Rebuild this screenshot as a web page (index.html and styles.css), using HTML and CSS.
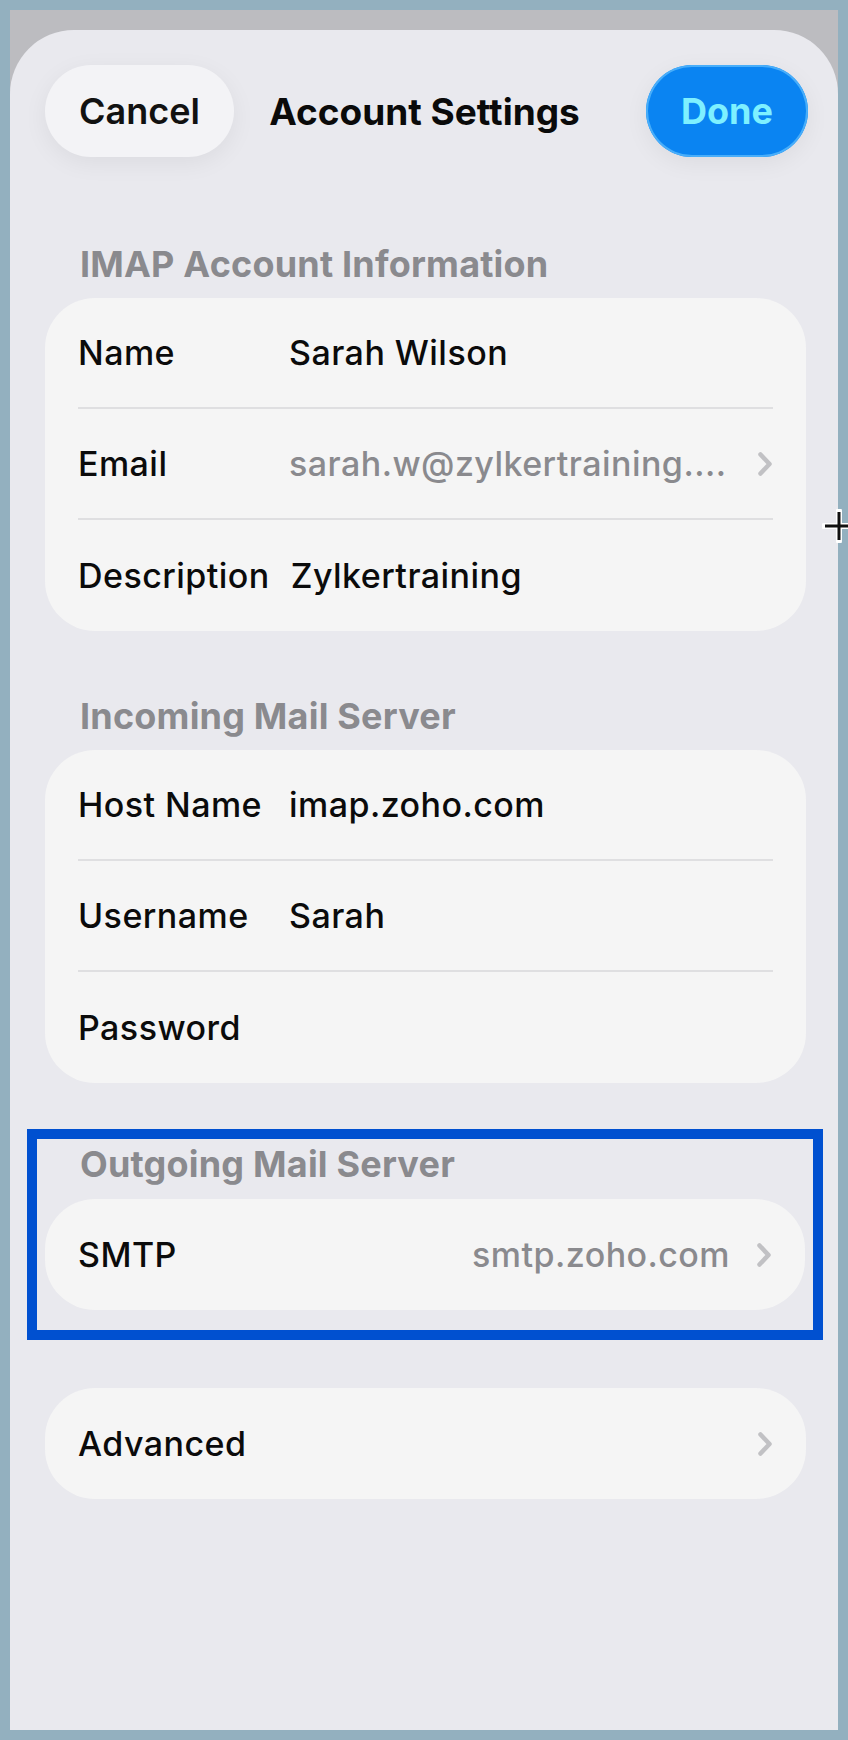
FILE: index.html
```html
<!DOCTYPE html>
<html lang="en">
  <head>
    <meta charset="UTF-8" />
    <meta name="viewport" content="width=device-width, initial-scale=1.0" />
    <title>Account Settings</title>
    <link rel="stylesheet" href="styles.css">
  </head>
  <body>
    <div class="screen">
      <div class="sheet">
        <!-- Верхняя панель -->
        <header class="topbar">
          <button class="pill cancel">Cancel</button>
          <h1 class="title">Account Settings</h1>
          <button class="pill done">Done</button>
        </header>

        <!-- IMAP -->
        <h2 class="section-title first">IMAP Account Information</h2>
        <div class="card">
          <div class="row">
            <span class="label">Name</span>
            <span class="value">Sarah Wilson</span>
          </div>
          <div class="row">
            <span class="label">Email</span>
            <span class="value muted">sarah.w@zylkertraining....</span>
            <svg class="chevron" viewBox="0 0 16 26"><path d="M3.5 3.5 L12.5 13 L3.5 22.5" /></svg>
          </div>
          <div class="row">
            <span class="label">Description</span>
            <span class="value">Zylkertraining</span>
          </div>
        </div>

        <!-- Входящая почта -->
        <h2 class="section-title">Incoming Mail Server</h2>
        <div class="card">
          <div class="row">
            <span class="label">Host Name</span>
            <span class="value">imap.zoho.com</span>
          </div>
          <div class="row">
            <span class="label">Username</span>
            <span class="value">Sarah</span>
          </div>
          <div class="row">
            <span class="label">Password</span>
            <span class="value"></span>
          </div>
        </div>

        <!-- Исходящая почта (выделено рамкой) -->
        <div class="highlight">
          <h2 class="section-title">Outgoing Mail Server</h2>
          <div class="card single">
            <div class="row">
              <span class="label">SMTP</span>
              <span class="value muted right">smtp.zoho.com</span>
              <svg class="chevron" viewBox="0 0 16 26"><path d="M3.5 3.5 L12.5 13 L3.5 22.5" /></svg>
            </div>
          </div>
        </div>

        <div class="card single advanced">
          <div class="row">
            <span class="label">Advanced</span>
            <span class="value"></span>
            <svg class="chevron" viewBox="0 0 16 26"><path d="M3.5 3.5 L12.5 13 L3.5 22.5" /></svg>
          </div>
        </div>
      </div>
    </div>

    <!-- курсор мыши -->
    <svg class="cursor" viewBox="0 0 34 34">
      <path d="M17 2 V32 M2 17 H32" stroke="#fff" stroke-width="6" stroke-linecap="round" />
      <path d="M17 3 V31 M3 17 H31" stroke="#111" stroke-width="3" />
    </svg>
  </body>
</html>
```

FILE: styles.css
```css
/* Основа */
body {
  margin: 0;
  background-color: #93b0bf;
  font-family: Inter, "Noto Sans", sans-serif;
  position: relative;
}

.screen {
  width: 828px;
  height: 1720px;
  margin: 10px;
  padding-top: 20px;
  box-sizing: border-box;
  background-color: #bcbcc0;
}

.sheet {
  height: 1700px;
  padding: 35px 32px 0 35px;
  box-sizing: border-box;
  background-color: #e9e9ee;
  border-radius: 64px 64px 0 0;
}

/* Верхняя панель */
.topbar {
  display: grid;
  grid-template-columns: 1fr auto 1fr;
  align-items: center;
}

.pill {
  height: 92px;
  border: none;
  border-radius: 46px;
  font-family: inherit;
  font-size: 36px;
  padding: 0;
}

.cancel {
  justify-self: start;
  width: 189px;
  background-color: #f3f3f6;
  color: #111;
  font-weight: 600;
  box-shadow: 0 6px 24px rgba(0, 0, 0, 0.06);
}

.done {
  justify-self: end;
  width: 162px;
  margin-right: -2px;
  background-color: #0a84f2;
  color: #7ef0ff;
  font-weight: 700;
  box-shadow: inset 0 0 0 2px #48aefa, 0 6px 24px rgba(0, 0, 0, 0.06);
}

.title {
  margin: 0 0 0 -2px;
  font-size: 37px;
  font-weight: 700;
  color: #0a0a0a;
}

/* Секции */
.section-title {
  margin: 64px 0 13px 0;
  font-size: 36px;
  line-height: 42px;
  font-weight: 700;
  letter-spacing: 0.2px;
  color: #8a8a8e;
  padding-left: 35px;
}

.section-title.first {
  margin-top: 86px;
}

.card {
  background-color: #f5f5f5;
  border-radius: 50px;
}

.row {
  display: flex;
  align-items: center;
  height: 111px;
  margin: 0 33px;
  box-sizing: border-box;
  border-bottom: 2px solid #dfdfe1;
  font-size: 34px;
  font-weight: 500;
  letter-spacing: 0.45px;
  color: #0b0b0b;
}

.row:last-child {
  border-bottom: none;
}

.label {
  min-width: 190px;
  margin-right: 21px;
  white-space: nowrap;
}

.value {
  flex: 1;
  white-space: nowrap;
}

.muted {
  color: #8a8a8e;
}

.right {
  text-align: right;
  margin-right: 26px;
}

.chevron {
  width: 16px;
  height: 26px;
  flex-shrink: 0;
}

.chevron path {
  fill: none;
  stroke: #c1c1c4;
  stroke-width: 4.5;
  stroke-linecap: round;
  stroke-linejoin: round;
}

/* Синяя рамка вокруг исходящего сервера */
.highlight {
  margin: 46px -17px 0 -18px;
  padding: 0 8px 20px 8px;
  border: 10px solid #0050d0;
}

.highlight .section-title {
  margin-top: 4px;
  margin-bottom: 14px;
}

.advanced {
  margin-top: 48px;
}

.cursor {
  position: absolute;
  left: 822px;
  top: 509px;
  width: 34px;
  height: 34px;
}
```
